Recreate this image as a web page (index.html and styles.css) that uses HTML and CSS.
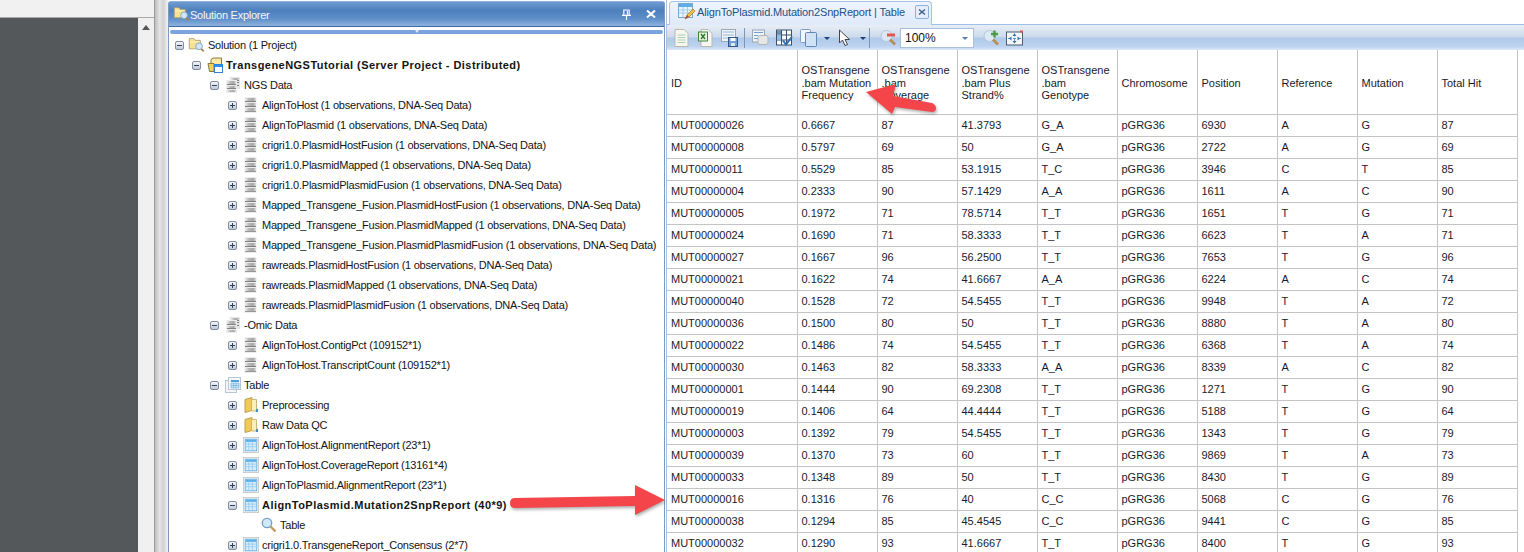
FILE: index.html
```html
<!DOCTYPE html>
<html lang="en">
<head>
<meta charset="utf-8">
<title>Solution Explorer</title>
<link rel="stylesheet" href="styles.css">
</head>
<body>
<svg class="defs" width="0" height="0" aria-hidden="true">
  <defs>
    <linearGradient id="drum" x1="0" x2="1" y1="0" y2="0">
      <stop offset="0" stop-color="#eeeeee"/>
      <stop offset="0.35" stop-color="#b8b8b8"/>
      <stop offset="0.75" stop-color="#a8a8a8"/>
      <stop offset="1" stop-color="#e0e0e0"/>
    </linearGradient>
    <symbol id="i-db" viewBox="0 0 16 16">
      <rect x="1.500" y="0" width="12" height="16" fill="#ececec"/>
      <rect x="2" y="1" width="11" height="3" fill="url(#drum)"/>
      <rect x="2" y="4" width="11" height="1" fill="#808080"/>
      <rect x="2" y="6" width="11" height="3" fill="url(#drum)"/>
      <rect x="2" y="9" width="11" height="1" fill="#808080"/>
      <rect x="2" y="11" width="11" height="3" fill="url(#drum)"/>
      <rect x="2" y="14" width="11" height="1" fill="#989898"/>
    </symbol>
    <symbol id="i-dbs" viewBox="0 0 16 16">
      <rect x="5" y="0" width="10" height="12" fill="#e4e4e4"/>
      <rect x="6" y="1" width="8" height="2" fill="url(#drum)"/>
      <rect x="6" y="3" width="8" height="1" fill="#808080"/>
      <rect x="10" y="5" width="4" height="1" fill="#808080"/>
      <rect x="10" y="8" width="4" height="1" fill="#808080"/>
      <rect x="1" y="3" width="11" height="13" fill="#ececec"/>
      <rect x="2" y="4" width="9" height="3" fill="url(#drum)"/>
      <rect x="2" y="7" width="9" height="1" fill="#808080"/>
      <rect x="2" y="9" width="9" height="2" fill="url(#drum)"/>
      <rect x="2" y="11" width="9" height="1" fill="#808080"/>
      <rect x="2" y="13" width="9" height="2" fill="url(#drum)"/>
    </symbol>
    <symbol id="i-sol" viewBox="0 0 20 18">
      <path d="M1.500 1.500H7L8.500 3.500H14.500V13.500H1.500Z" fill="#f8e292" stroke="#a79c72"/>
      <path d="M2.500 5.500H13.500" stroke="#fff6c8"/>
      <circle cx="13" cy="10.500" r="4" fill="#cfe6f8" stroke="#7f9fbd"/>
      <path d="M15.500 13.500 L18.500 16.500" stroke="#a8834a" stroke-width="2"/>
    </symbol>
    <symbol id="i-proj" viewBox="0 0 16 16">
      <path d="M1 6.500H4V2.500L6 1H14.500V8" fill="#fbe9a8" stroke="#8a7a3a"/>
      <path d="M1 6.500L2.500 14.500H7V6.500Z" fill="#f3cf62" stroke="#8a7a3a"/>
      <rect x="7.500" y="7.500" width="8" height="8" fill="#fff" stroke="#2f7fd4"/>
      <rect x="8" y="8" width="7" height="2" fill="#2f8fe8"/>
    </symbol>
    <symbol id="i-tset" viewBox="0 0 16 16">
      <rect x="0.500" y="3.500" width="11" height="12" fill="#f2f6fa" stroke="#b9c5cf"/>
      <rect x="3.500" y="0.500" width="12" height="12" fill="#f5f8fb" stroke="#b9c5cf"/>
      <rect x="6" y="3" width="8" height="2" fill="#4ea0dc"/>
      <path d="M6 6H14V11H6ZM8.500 6V11M11 6V11M6 8.500H14" fill="#cfe6f7" stroke="#62a8dc" stroke-width="0.600"/>
    </symbol>
    <symbol id="i-folder" viewBox="0 0 16 16">
      <path d="M2 2.500 L9 0.500 V13.500 L2 15.500Z" fill="#f0c95a" stroke="#bca14f"/>
      <path d="M9 2.500H13.500V14H9" fill="#fbeeb9" stroke="#c7b680"/>
      <path d="M13 12.500L15 11.500V15H13Z" fill="#3e8fd0"/>
    </symbol>
    <symbol id="i-table" viewBox="0 0 18 18">
      <rect x="0.500" y="0.500" width="17" height="17" fill="#f3f3f3" stroke="#c8c8c8"/>
      <rect x="2.500" y="2.500" width="13" height="13" fill="#d8ecfa" stroke="#67b0e4"/>
      <rect x="3" y="3" width="12" height="2.500" fill="#5cb0e8"/>
      <path d="M2.500 8H15.500M2.500 11H15.500M6.500 5V15.500M10.500 5V15.500" stroke="#8cc6ec" stroke-width="0.800"/>
    </symbol>
    <symbol id="i-lens" viewBox="0 0 16 16">
      <circle cx="6" cy="6" r="4.700" fill="#cfe8fa" stroke="#6f9fc8" stroke-width="1.300"/>
      <path d="M9.500 9.500L14.500 14.500" stroke="#c29a55" stroke-width="2.400"/>
    </symbol>
    <symbol id="i-doc" viewBox="0 0 16 18">
      <path d="M1.500 0.500H10.500L14.500 4.500V17.500H1.500Z" fill="#f7f7f0" stroke="#b9b9b0"/>
      <path d="M4 6H12M4 8.500H12M4 11H12M4 13.500H12" stroke="#a9d0b8"/>
    </symbol>
    <symbol id="i-xls" viewBox="0 0 16 18">
      <path d="M3.500 0.500H10.500L14.500 4.500V17.500H3.500Z" fill="#f7f7f0" stroke="#b9b9b0"/>
      <rect x="1" y="3" width="9" height="9" fill="#e8f3e2" stroke="#3c8a3c"/>
      <path d="M3.500 5L7.500 10M7.500 5L3.500 10" stroke="#1e7a2e" stroke-width="1.300"/>
    </symbol>
    <symbol id="i-save" viewBox="0 0 17 18">
      <rect x="0.500" y="0.500" width="14" height="12" fill="#eef3f8" stroke="#9aa8b8"/>
      <path d="M2 3H13M2 6H13M2 9H13" stroke="#9cb6d0" stroke-width="1.200"/>
      <rect x="7.500" y="8.500" width="9" height="9" fill="#6f9fd4" stroke="#33557f"/>
      <rect x="9.500" y="9" width="5" height="3" fill="#fff"/>
      <rect x="10" y="14" width="4" height="3" fill="#dde7f2"/>
    </symbol>
    <symbol id="i-cols" viewBox="0 0 17 17">
      <rect x="0.500" y="0.500" width="12" height="12" fill="#eef3f8" stroke="#9aa8b8"/>
      <path d="M2 3H11M2 6H6M2 9H6" stroke="#6fa0cf" stroke-width="1.200"/>
      <rect x="6" y="6" width="10" height="9" rx="2" fill="#e6e6e6" stroke="#b5b5b5"/>
    </symbol>
    <symbol id="i-grid" viewBox="0 0 17 17">
      <rect x="0.500" y="0.500" width="15" height="15" fill="#fff" stroke="#39536f"/>
      <path d="M0.500 5.500H15.500M0.500 10.500H15.500M5.500 0.500V15.500M10.500 0.500V15.500" stroke="#39536f"/>
      <rect x="1" y="1" width="4" height="4" fill="#6f8fb0"/>
      <rect x="1" y="6" width="4" height="4" fill="#8fc0ea"/>
      <path d="M7 11L10 15L16 7" fill="none" stroke="#2f6fb5" stroke-width="2"/>
    </symbol>
    <symbol id="i-copy" viewBox="0 0 17 18">
      <rect x="0.500" y="0.500" width="10" height="13" rx="1" fill="#f2f6fb" stroke="#7f9fc4"/>
      <rect x="5.500" y="3.500" width="11" height="14" rx="1" fill="#cfe2f6" stroke="#5f87b5"/>
    </symbol>
    <symbol id="i-cursor" viewBox="0 0 12 18">
      <path d="M1 1V14L4 11L6.500 16.500L9 15.500L6.500 10.500H11Z" fill="#fff" stroke="#444"/>
    </symbol>
    <symbol id="i-zout" viewBox="0 0 17 17">
      <circle cx="6.500" cy="6.500" r="5.500" fill="#dce9f5" stroke="#b3c7da"/>
      <rect x="7" y="4" width="8" height="3" fill="#e0574f"/>
      <path d="M10 10L15 15" stroke="#b5915a" stroke-width="3"/>
    </symbol>
    <symbol id="i-zin" viewBox="0 0 17 17">
      <circle cx="6.500" cy="6.500" r="5.500" fill="#dce9f5" stroke="#b3c7da"/>
      <path d="M11.500 1V8M8 4.500H15" stroke="#4f9a45" stroke-width="2.400"/>
      <path d="M10 10L15 15" stroke="#b5915a" stroke-width="3"/>
    </symbol>
    <symbol id="i-fit" viewBox="0 0 17 17">
      <rect x="0.500" y="2.500" width="16" height="13" fill="#f4f6f8" stroke="#4b5f73"/>
      <path d="M2 9H15M8.500 4V14" stroke="#5c93c8" stroke-dasharray="3 2"/>
      <path d="M3 9L5.500 7V11ZM14 9L11.500 7V11ZM8.500 4L6.500 6.500H10.500ZM8.500 14L6.500 11.500H10.500Z" fill="#2f6fb5"/>
      <rect x="14" y="1" width="3" height="2" fill="#e0574f"/>
    </symbol>
    <symbol id="i-tabdoc" viewBox="0 0 18 18">
      <rect x="0.500" y="0.500" width="14" height="14" fill="#eaf4fc" stroke="#78a8d0"/>
      <rect x="1" y="1" width="13" height="3" fill="#5caee8"/>
      <path d="M1 7H14M1 10H14M5 4V14M9.500 4V14" stroke="#8fc2ea" stroke-width="0.800"/>
      <path d="M7 16L9 12L15 6L17 8L11 14Z" fill="#f0c040" stroke="#9a7a30" stroke-width="0.700"/>
      <path d="M7 16L9 12L11 14Z" fill="#c04040"/>
    </symbol>
  </defs>
</svg>

<div class="app">
  <aside class="side">
    <div class="side-top"></div>
    <div class="side-body">
      <div class="dark"></div>
      <div class="scroll"><span class="scroll-up"></span></div>
    </div>
  </aside>
  <div class="splitter"></div>

  <section class="explorer">
    <header class="ex-title">
      <svg class="ic-title"><use href="#i-sol"/></svg>
      <span class="ex-name">Solution Explorer</span>
      <svg class="ic-pin" viewBox="0 0 10 12"><path d="M2 1H8V7H2ZM0 7H10M5 7V12M6 2V6" fill="none" stroke="#fff" stroke-width="1.300"/></svg>
      <svg class="ic-x" viewBox="0 0 10 8"><path d="M1 0.500L9 7.500M9 0.500L1 7.500" stroke="#fff" stroke-width="2"/></svg>
    </header>
    <div class="ex-strip"><span class="ex-strip-mark"></span></div>
    <ul class="tree">
      <li class="row l0"><span class="tog"></span><svg class="ic ic-sol"><use href="#i-sol"/></svg><span>Solution (1 Project)</span></li>
      <li class="row l1"><span class="tog"></span><svg class="ic"><use href="#i-proj"/></svg><b>TransgeneNGSTutorial (Server Project - Distributed)</b></li>
      <li class="row l2"><span class="tog"></span><svg class="ic"><use href="#i-dbs"/></svg><span>NGS Data</span></li>
      <li class="row l3"><span class="tog plus"></span><svg class="ic"><use href="#i-db"/></svg><span>AlignToHost (1 observations, DNA-Seq Data)</span></li>
      <li class="row l3"><span class="tog plus"></span><svg class="ic"><use href="#i-db"/></svg><span>AlignToPlasmid (1 observations, DNA-Seq Data)</span></li>
      <li class="row l3"><span class="tog plus"></span><svg class="ic"><use href="#i-db"/></svg><span>crigri1.0.PlasmidHostFusion (1 observations, DNA-Seq Data)</span></li>
      <li class="row l3"><span class="tog plus"></span><svg class="ic"><use href="#i-db"/></svg><span>crigri1.0.PlasmidMapped (1 observations, DNA-Seq Data)</span></li>
      <li class="row l3"><span class="tog plus"></span><svg class="ic"><use href="#i-db"/></svg><span>crigri1.0.PlasmidPlasmidFusion (1 observations, DNA-Seq Data)</span></li>
      <li class="row l3"><span class="tog plus"></span><svg class="ic"><use href="#i-db"/></svg><span>Mapped_Transgene_Fusion.PlasmidHostFusion (1 observations, DNA-Seq Data)</span></li>
      <li class="row l3"><span class="tog plus"></span><svg class="ic"><use href="#i-db"/></svg><span>Mapped_Transgene_Fusion.PlasmidMapped (1 observations, DNA-Seq Data)</span></li>
      <li class="row l3"><span class="tog plus"></span><svg class="ic"><use href="#i-db"/></svg><span>Mapped_Transgene_Fusion.PlasmidPlasmidFusion (1 observations, DNA-Seq Data)</span></li>
      <li class="row l3"><span class="tog plus"></span><svg class="ic"><use href="#i-db"/></svg><span>rawreads.PlasmidHostFusion (1 observations, DNA-Seq Data)</span></li>
      <li class="row l3"><span class="tog plus"></span><svg class="ic"><use href="#i-db"/></svg><span>rawreads.PlasmidMapped (1 observations, DNA-Seq Data)</span></li>
      <li class="row l3"><span class="tog plus"></span><svg class="ic"><use href="#i-db"/></svg><span>rawreads.PlasmidPlasmidFusion (1 observations, DNA-Seq Data)</span></li>
      <li class="row l2"><span class="tog"></span><svg class="ic"><use href="#i-dbs"/></svg><span>-Omic Data</span></li>
      <li class="row l3"><span class="tog plus"></span><svg class="ic"><use href="#i-db"/></svg><span>AlignToHost.ContigPct (109152*1)</span></li>
      <li class="row l3"><span class="tog plus"></span><svg class="ic"><use href="#i-db"/></svg><span>AlignToHost.TranscriptCount (109152*1)</span></li>
      <li class="row l2"><span class="tog"></span><svg class="ic"><use href="#i-tset"/></svg><span>Table</span></li>
      <li class="row l3"><span class="tog plus"></span><svg class="ic"><use href="#i-folder"/></svg><span>Preprocessing</span></li>
      <li class="row l3"><span class="tog plus"></span><svg class="ic"><use href="#i-folder"/></svg><span>Raw Data QC</span></li>
      <li class="row l3"><span class="tog plus"></span><svg class="ic"><use href="#i-table"/></svg><span>AlignToHost.AlignmentReport (23*1)</span></li>
      <li class="row l3"><span class="tog plus"></span><svg class="ic"><use href="#i-table"/></svg><span>AlignToHost.CoverageReport (13161*4)</span></li>
      <li class="row l3"><span class="tog plus"></span><svg class="ic"><use href="#i-table"/></svg><span>AlignToPlasmid.AlignmentReport (23*1)</span></li>
      <li class="row l3"><span class="tog"></span><svg class="ic"><use href="#i-table"/></svg><b>AlignToPlasmid.Mutation2SnpReport (40*9)</b></li>
      <li class="row l4"><svg class="ic"><use href="#i-lens"/></svg><span>Table</span></li>
      <li class="row l3"><span class="tog plus"></span><svg class="ic"><use href="#i-table"/></svg><span>crigri1.0.TransgeneReport_Consensus (2*7)</span></li>
    </ul>
  </section>

  <section class="report">
    <div class="tabs">
      <div class="tab">
        <svg class="ic-tab"><use href="#i-tabdoc"/></svg>
        <span>AlignToPlasmid.Mutation2SnpReport | Table</span>
        <svg class="tab-x" viewBox="0 0 14 14"><rect x="0.500" y="0.500" width="13" height="13" rx="1.500" fill="#e4eefa" stroke="#8fb0d8"/><path d="M4 4.500L10 9.500M10 4.500L4 9.500" stroke="#3a5f8a" stroke-width="1.500"/></svg>
      </div>
    </div>
    <div class="toolbar">
      <svg class="tb"><use href="#i-doc"/></svg>
      <svg class="tb"><use href="#i-xls"/></svg>
      <svg class="tb"><use href="#i-save"/></svg>
      <span class="tb-sep"></span>
      <svg class="tb"><use href="#i-cols"/></svg>
      <svg class="tb"><use href="#i-grid"/></svg>
      <svg class="tb"><use href="#i-copy"/></svg>
      <span class="caret"></span>
      <svg class="tb tb-cursor"><use href="#i-cursor"/></svg>
      <span class="caret caret-end"></span>
      <span class="tb-sep tb-sep-end"></span>
      <svg class="tb tb-zout"><use href="#i-zout"/></svg>
      <div class="zoom"><span>100%</span><span class="caret caret-zoom"></span></div>
      <svg class="tb tb-zin"><use href="#i-zin"/></svg>
      <svg class="tb"><use href="#i-fit"/></svg>
    </div>
    <div class="grid-wrap">
      <table class="grid">
        <colgroup>
          <col class="c-id"><col class="c-n"><col class="c-n"><col class="c-n"><col class="c-n"><col class="c-n"><col class="c-n"><col class="c-n"><col class="c-n"><col class="c-n">
        </colgroup>
        <thead>
          <tr>
            <th>ID</th>
            <th>OSTransgene<br>.bam Mutation<br>Frequency</th>
            <th>OSTransgene<br>.bam<br>Coverage</th>
            <th>OSTransgene<br>.bam Plus<br>Strand%</th>
            <th>OSTransgene<br>.bam<br>Genotype</th>
            <th>Chromosome</th>
            <th>Position</th>
            <th>Reference</th>
            <th>Mutation</th>
            <th>Total Hit</th>
          </tr>
        </thead>
        <tbody>
          <tr><td>MUT00000026</td><td>0.6667</td><td>87</td><td>41.3793</td><td>G_A</td><td>pGRG36</td><td>6930</td><td>A</td><td>G</td><td>87</td></tr>
          <tr><td>MUT00000008</td><td>0.5797</td><td>69</td><td>50</td><td>G_A</td><td>pGRG36</td><td>2722</td><td>A</td><td>G</td><td>69</td></tr>
          <tr><td>MUT00000011</td><td>0.5529</td><td>85</td><td>53.1915</td><td>T_C</td><td>pGRG36</td><td>3946</td><td>C</td><td>T</td><td>85</td></tr>
          <tr><td>MUT00000004</td><td>0.2333</td><td>90</td><td>57.1429</td><td>A_A</td><td>pGRG36</td><td>1611</td><td>A</td><td>C</td><td>90</td></tr>
          <tr><td>MUT00000005</td><td>0.1972</td><td>71</td><td>78.5714</td><td>T_T</td><td>pGRG36</td><td>1651</td><td>T</td><td>G</td><td>71</td></tr>
          <tr><td>MUT00000024</td><td>0.1690</td><td>71</td><td>58.3333</td><td>T_T</td><td>pGRG36</td><td>6623</td><td>T</td><td>A</td><td>71</td></tr>
          <tr><td>MUT00000027</td><td>0.1667</td><td>96</td><td>56.2500</td><td>T_T</td><td>pGRG36</td><td>7653</td><td>T</td><td>G</td><td>96</td></tr>
          <tr><td>MUT00000021</td><td>0.1622</td><td>74</td><td>41.6667</td><td>A_A</td><td>pGRG36</td><td>6224</td><td>A</td><td>C</td><td>74</td></tr>
          <tr><td>MUT00000040</td><td>0.1528</td><td>72</td><td>54.5455</td><td>T_T</td><td>pGRG36</td><td>9948</td><td>T</td><td>A</td><td>72</td></tr>
          <tr><td>MUT00000036</td><td>0.1500</td><td>80</td><td>50</td><td>T_T</td><td>pGRG36</td><td>8880</td><td>T</td><td>A</td><td>80</td></tr>
          <tr><td>MUT00000022</td><td>0.1486</td><td>74</td><td>54.5455</td><td>T_T</td><td>pGRG36</td><td>6368</td><td>T</td><td>A</td><td>74</td></tr>
          <tr><td>MUT00000030</td><td>0.1463</td><td>82</td><td>58.3333</td><td>A_A</td><td>pGRG36</td><td>8339</td><td>A</td><td>C</td><td>82</td></tr>
          <tr><td>MUT00000001</td><td>0.1444</td><td>90</td><td>69.2308</td><td>T_T</td><td>pGRG36</td><td>1271</td><td>T</td><td>G</td><td>90</td></tr>
          <tr><td>MUT00000019</td><td>0.1406</td><td>64</td><td>44.4444</td><td>T_T</td><td>pGRG36</td><td>5188</td><td>T</td><td>G</td><td>64</td></tr>
          <tr><td>MUT00000003</td><td>0.1392</td><td>79</td><td>54.5455</td><td>T_T</td><td>pGRG36</td><td>1343</td><td>T</td><td>G</td><td>79</td></tr>
          <tr><td>MUT00000039</td><td>0.1370</td><td>73</td><td>60</td><td>T_T</td><td>pGRG36</td><td>9869</td><td>T</td><td>A</td><td>73</td></tr>
          <tr><td>MUT00000033</td><td>0.1348</td><td>89</td><td>50</td><td>T_T</td><td>pGRG36</td><td>8430</td><td>T</td><td>G</td><td>89</td></tr>
          <tr><td>MUT00000016</td><td>0.1316</td><td>76</td><td>40</td><td>C_C</td><td>pGRG36</td><td>5068</td><td>C</td><td>G</td><td>76</td></tr>
          <tr><td>MUT00000038</td><td>0.1294</td><td>85</td><td>45.4545</td><td>C_C</td><td>pGRG36</td><td>9441</td><td>C</td><td>G</td><td>85</td></tr>
          <tr><td>MUT00000032</td><td>0.1290</td><td>93</td><td>41.6667</td><td>T_T</td><td>pGRG36</td><td>8400</td><td>T</td><td>G</td><td>93</td></tr>
        </tbody>
      </table>
    </div>
  </section>
</div>

<svg class="arrow arrow-up" viewBox="0 0 80 40" aria-hidden="true">
  <path d="M6 12 L36 4 L33 16 L72 23 Q76 25 76 28 Q76 32 72 32 L35 27 L32 34 Z" fill="#f4464a"/>
</svg>
<svg class="arrow arrow-right" viewBox="0 0 165 38" aria-hidden="true">
  <path d="M10 16 L130 14 L130 3 L160 18 L130 33 L130 24 L10 26 Q5 26 5 21 Q5 16 10 16Z" fill="#f4464a"/>
</svg>
</body>
</html>
```

FILE: styles.css
```css
* { box-sizing: border-box; }
html, body { margin: 0; height: 100%; overflow: hidden; background: #fff; }
body { font-family: "Liberation Sans", Arial, sans-serif; font-size: 11px; color: #111; }
.defs { position: absolute; }
ul { list-style: none; margin: 0; padding: 0; }

.app { display: flex; width: 1524px; height: 552px; overflow: hidden; }

/* left dark region */
.side { width: 155px; flex: none; display: flex; flex-direction: column; border-right: 1px solid #9a9a9a; }
.side-top { height: 18px; flex: none; background: #f1f1f1; border-bottom: 1px solid #a8a8a8; }
.side-body { flex: 1; display: flex; }
.dark { width: 138px; background: #54585b; }
.scroll { flex: 1; background: #f0f0f0; display: flex; justify-content: center; padding-top: 7px; }
.scroll-up { width: 0; height: 0; border: 4px solid transparent; border-top: 0; border-bottom: 5px solid #555; margin-left: -1px; }
.splitter { width: 13px; flex: none; background: linear-gradient(90deg, #bdbdbd, #e4e4e4 35%, #d2d2d2 65%, #f2f2f2); }

/* solution explorer */
.explorer { width: 497px; flex: none; display: flex; flex-direction: column; height: 100%; border-left: 1px solid #7e99bd; border-right: 1px solid #7e99bd; background: #fff; margin-top: 1px; border-top: 1px solid #8fb2dd; border-radius: 3px 3px 0 0; }
.ex-title { height: 25px; flex: none; display: flex; align-items: center; color: #fff; font-size: 11px; letter-spacing: -0.25px; padding: 2px 8px 0 4px; background: linear-gradient(180deg, #6f9bd2 0%, #4d80bd 35%, #5f8fc9 70%, #8fb2de 100%); border-bottom: 1px solid #3f6ba5; }
.ic-title { width: 17px; height: 16px; margin: -2px 0 0 0; }
.ex-name { flex: 1; color: #f2f6fb; }
.ic-pin { width: 9px; height: 11px; margin: -2px 15px 0 0; }
.ic-x { width: 10px; height: 8px; margin-top: -2px; }
.ex-strip { height: 8px; flex: none; padding: 3px 1px 1px 1px; background: #fff; position: relative; }
.ex-strip::before { content: ""; display: block; height: 4px; background: #7ba3de; border-radius: 2px; }
.ex-strip-mark { position: absolute; left: 246px; top: 3px; width: 0; height: 0; border: 2px solid transparent; border-top: 3px solid #dfe9f7; }
.tree { color: #141414; letter-spacing: -0.24px; }
.row { height: 20px; display: flex; align-items: center; white-space: nowrap; }
.row b { font-weight: bold; letter-spacing: 0.46px; }
.l0 { padding-left: 6px; }
.l1 { padding-left: 23px; }
.l2 { padding-left: 41px; }
.l3 { padding-left: 59px; }
.l4 { padding-left: 92px; }
.tog { width: 9px; height: 9px; flex: none; border: 1px solid #838da0; border-radius: 2px; background: linear-gradient(#33435f, #33435f) center / 5px 1px no-repeat, linear-gradient(180deg, #f4f6f9, #bfc8d6); margin-right: 6px; }
.tog.plus { background: linear-gradient(#33435f, #33435f) center / 5px 1px no-repeat, linear-gradient(#33435f, #33435f) center / 1px 5px no-repeat, linear-gradient(180deg, #f4f6f9, #bfc8d6); }
.ic { width: 16px; height: 16px; flex: none; margin-right: 3px; }
.ic-sol { width: 17px; margin-left: -2px; }

/* report */
.report { flex: 1; min-width: 0; display: flex; flex-direction: column; margin-left: 1px; border-left: 1px solid #a9c0de; }
.tabs { height: 25px; flex: none; padding: 1px 0 0 2px; border-bottom: 1px solid #9cc0ea; background: #fff; }
.tab { width: 263px; height: 24px; display: flex; align-items: center; padding: 0 2px 3px 8px; border: 1px solid #a6c4e8; border-bottom: 0; border-radius: 4px 4px 0 0; background: linear-gradient(180deg, #eef4fc, #dfeafa); color: #1f4f87; letter-spacing: -0.15px; }
.tab span { flex: 1; white-space: nowrap; }
.ic-tab { width: 18px; height: 18px; margin-right: 1px; flex: none; }
.tab-x { width: 14px; height: 14px; flex: none; }
.toolbar { height: 25px; flex: none; display: flex; align-items: center; padding: 1px 0 0 6px; background: linear-gradient(180deg, #e9eef5 0%, #ccdaec 48%, #afc9ea 52%, #bcd2ef 85%, #dce8f7 100%); }
.tb { width: 17px; height: 18px; flex: none; margin-right: 7px; }
.tb-cursor { width: 13px; margin-right: 9px; }
.tb-zout { margin-right: 3px; }
.tb-zin { margin-right: 6px; }
.tb-sep { width: 1px; height: 20px; background: #7d97b6; margin: 0 7px 0 -1px; flex: none; }
.tb-sep-end { margin: 0 10px 0 0; }
.caret { width: 0; height: 0; border: 3px solid transparent; border-top: 3px solid #1d3f7a; border-bottom: 0; margin-right: 8px; flex: none; }
.caret-end { margin-right: 3px; }
.zoom { width: 74px; height: 20px; flex: none; margin-right: 9px; display: flex; align-items: center; justify-content: space-between; padding: 0 0 0 4px; background: #fff; border: 1px solid #a9c0de; font-size: 12px; color: #111; }
.caret-zoom { border-top-color: #5b7ea8; margin-right: 5px; }
.grid-wrap { flex: 1; min-height: 0; overflow: hidden; }
.grid { border-collapse: collapse; table-layout: fixed; width: 850px; border-right: 1px solid #c4c4c4; }
.c-id { width: 130px; }
.c-n { width: 80px; }
.grid th, .grid td { border: 1px solid #c4c4c4; padding: 0 4px; font-weight: normal; text-align: left; overflow: hidden; white-space: nowrap; color: #1a1a2a; }
.grid thead tr { height: 64px; }
.grid th { border-top: 0; line-height: 12.5px; padding-top: 2px; }
.grid th:first-child, .grid td:first-child { border-left: 0; }
.grid tbody tr { height: 22px; }

/* annotation arrows */
.arrow { position: absolute; pointer-events: none; filter: drop-shadow(1px 2px 1.500px rgba(0, 0, 0, 0.3)); }
.arrow-up { left: 860px; top: 80px; width: 80px; height: 40px; }
.arrow-right { left: 505px; top: 482px; width: 165px; height: 38px; }
```
